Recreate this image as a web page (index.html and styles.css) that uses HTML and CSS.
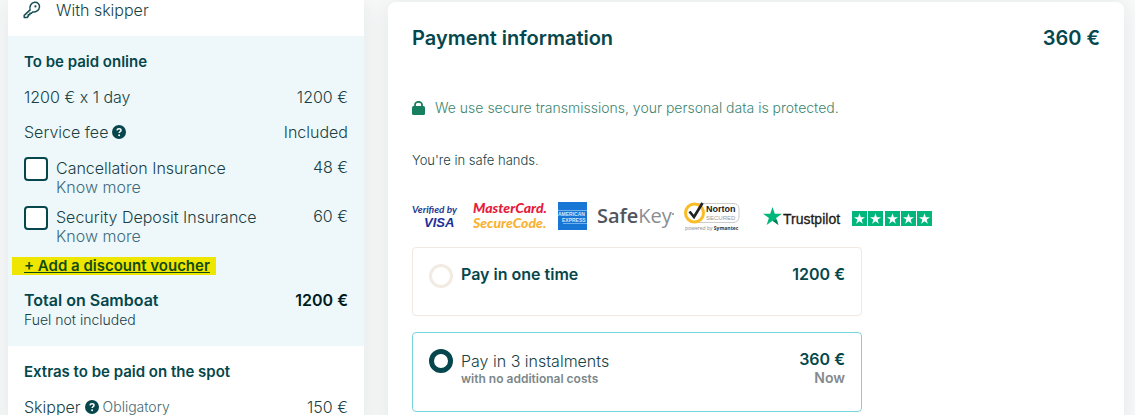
FILE: index.html
```html
<!DOCTYPE html>
<html lang="en">
<head>
<meta charset="utf-8">
<title>Payment information</title>
<link rel="stylesheet" href="styles.css">
</head>
<body>
<svg class="defs" width="0" height="0" aria-hidden="true">
  <symbol id="help" viewBox="0 0 14 14">
    <circle cx="7" cy="7" r="7" fill="#05474c"/>
    <path d="M5 5.4C5.1 4.3 5.9 3.8 7 3.8C8.2 3.8 9 4.4 9 5.4C9 6.7 7.2 6.6 7.1 8" fill="none" stroke="#fff" stroke-width="1.5"/>
    <circle cx="7.1" cy="10.2" r="1" fill="#fff"/>
  </symbol>
  <symbol id="star" viewBox="0 0 20 19">
    <path d="M10 0L12.4 7.2H20L13.8 11.7L16.2 19L10 14.5L3.8 19L6.2 11.7L0 7.2H7.6Z"/>
  </symbol>
</svg>
<div class="layout">
  <aside class="card summary">
    <div class="crew">
      <svg class="key" viewBox="0 0 18 18" width="18" height="18" aria-hidden="true">
        <path d="M7.1 8.9C6.2 5.8 7.8 1.6 11.6 1.3C14.6 1.1 16.7 3 16.5 6C16.2 9.4 12.8 11.5 9.6 10.9L8.4 12.2H6.9V13.8H5.2V15.4L3.8 16.6H1.2V14.4Z" fill="none" stroke="#174e54" stroke-width="1.5" stroke-linejoin="round"/>
        <circle cx="12.4" cy="5.4" r="1.1" fill="#174e54"/>
      </svg>
      <span>With skipper</span>
    </div>
    <section class="online">
      <h2 class="subhead">To be paid online</h2>
      <div class="row"><span>1200 € x 1 day</span><span>1200 €</span></div>
      <div class="row"><span class="term">Service fee <svg class="help" aria-hidden="true"><use href="#help"/></svg></span><span>Included</span></div>
      <div class="option">
        <input class="check" type="checkbox" id="cancel">
        <div class="option-text"><label for="cancel">Cancellation Insurance</label><a class="more" href="#cancel">Know more</a></div>
        <span>48 €</span>
      </div>
      <div class="option">
        <input class="check" type="checkbox" id="deposit">
        <div class="option-text"><label for="deposit">Security Deposit Insurance</label><a class="more" href="#deposit">Know more</a></div>
        <span>60 €</span>
      </div>
      <a class="voucher" href="#voucher">+ Add a discount voucher</a>
      <div class="total"><span>Total on Samboat</span><span class="sum">1200 €</span></div>
      <p class="note">Fuel not included</p>
    </section>
    <section class="extras">
      <h2 class="subhead">Extras to be paid on the spot</h2>
      <div class="row"><span class="term">Skipper <svg class="help" aria-hidden="true"><use href="#help"/></svg> <small class="small">Obligatory</small></span><span>150 €</span></div>
    </section>
  </aside>
  <main class="card payment">
    <header class="title"><h1 class="heading">Payment information</h1><span>360 €</span></header>
    <p class="secure">
      <svg viewBox="0 0 13 14" width="13" height="14" aria-hidden="true"><rect y="5" width="13" height="9" rx="1.5" fill="#157f5f"/><path d="M3 6V4A3.5 3.2 0 0 1 10 4V6" fill="none" stroke="#157f5f" stroke-width="1.8"/></svg>
      We use secure transmissions, your personal data is protected.
    </p>
    <p class="safe">You're in safe hands.</p>
    <div class="logos">
      <svg width="51" height="32" role="img" aria-label="Verified by VISA">
        <text x="0" y="13" class="verified">Verified by</text>
        <text x="12" y="27" class="visa">VISA</text>
      </svg>
      <svg width="75" height="32" role="img" aria-label="MasterCard SecureCode">
        <text x="0" y="13" class="mc" fill="#e71b3b">MasterCard.</text>
        <text x="0" y="28" class="mc" fill="#f9b233">SecureCode.</text>
      </svg>
      <svg width="29" height="32" role="img" aria-label="American Express">
        <rect y="2" width="29" height="28" fill="#1877d4"/>
        <rect x="0" y="10" width="29" height="1" fill="#71b1ec"/>
        <text x="0" y="16" class="amex">AMERICAN</text>
        <text x="4" y="22" class="amex">EXPRESS</text>
        <rect x="5" y="23" width="24" height="1" fill="#71b1ec"/>
      </svg>
      <svg width="77" height="32" role="img" aria-label="SafeKey">
        <text x="0" y="23" class="safekey"><tspan class="safe-bold">Safe</tspan><tspan>Key</tspan></text>
        <circle cx="76" cy="14" r="1" fill="#8a8d92"/>
      </svg>
      <svg width="56" height="32" role="img" aria-label="Norton Secured, powered by Symantec">
        <path d="M14 3.5H49Q55 3.5 55 9V16Q55 22.5 49 22.5H14" fill="#fff" stroke="#ccc" stroke-width="1"/>
        <circle cx="10.5" cy="13" r="9" fill="#fff" stroke="#fbbc25" stroke-width="3"/>
        <path d="M5.5 11.5L10 17L18.5 3" fill="none" stroke="#222" stroke-width="2.7"/>
        <text x="22" y="12" class="norton">Norton</text>
        <text x="22" y="20" class="secured">SECURED</text>
        <text x="1" y="30" class="powered">powered by <tspan class="symantec">Symantec</tspan></text>
      </svg>
      <svg class="trust" width="79" height="32" role="img" aria-label="Trustpilot">
        <use href="#star" x="0" y="7" width="19" height="18" fill="#00b67a"/>
        <path d="M9.5 20.8L14 19.6L15.4 25Z" fill="#005128" opacity=".55"/>
        <text x="20" y="24" class="trustpilot">Trustpilot</text>
      </svg>
      <svg width="81" height="32" role="img" aria-label="Five stars">
        <g fill="#00b67a"><rect y="11" width="15" height="15"/><rect x="16" y="11" width="15" height="15"/><rect x="33" y="11" width="15" height="15"/><rect x="49" y="11" width="15" height="15"/><rect x="65" y="11" width="15" height="15"/></g>
        <g fill="#fff"><use href="#star" x="2" y="13" width="11" height="11"/><use href="#star" x="18" y="13" width="11" height="11"/><use href="#star" x="35" y="13" width="11" height="11"/><use href="#star" x="51" y="13" width="11" height="11"/><use href="#star" x="67" y="13" width="11" height="11"/></g>
      </svg>
    </div>
    <form class="plans">
      <label class="plan">
        <input class="radio" type="radio" name="plan">
        <span class="plan-name strong">Pay in one time</span>
        <span class="price">1200 €</span>
      </label>
      <label class="plan chosen">
        <input class="radio" type="radio" name="plan" checked>
        <span class="plan-name detailed">Pay in 3 instalments<small class="costs">with no additional costs</small></span>
        <span class="price">360 €<small class="now">Now</small></span>
      </label>
    </form>
  </main>
</div>
</body>
</html>
```
FILE: styles.css
```css
* { box-sizing: border-box; }
body { margin: 0; background: #f9fafa; color: #173f45; font: 300 16px/20px Inter, "Noto Sans", sans-serif; }
h1, h2, p { margin: 0; }
a { color: inherit; text-decoration: none; }
.defs { position: absolute; }
.layout { display: grid; grid-template-columns: 356px 1fr; gap: 24px; padding: 0 11px 0 8px; min-height: 100vh; max-height: 100vh; overflow: hidden; }
.card { background: #fff; box-shadow: 0 0 24px rgba(0, 50, 55, .1); }
.crew { display: flex; align-items: center; gap: 15px; height: 36px; padding: 0 15px 16px; }
.key { flex: none; }
.online { display: flow-root; background: #eef8fa; padding: 16px; }
.subhead { font-size: 15px; line-height: 20px; font-weight: 600; color: #05474c; margin-bottom: 15px; }
.row { display: flex; justify-content: space-between; margin-bottom: 15px; }
.term { display: flex; align-items: center; gap: 4px; }
.help { width: 14px; height: 14px; flex: none; }
.small { font-size: 14px; color: #456a6f; }
.option { display: flex; gap: 8px; margin-bottom: 9px; }
.check { appearance: none; flex: none; width: 24px; height: 24px; margin: 0; border: 2px solid #05474c; border-radius: 4px; background: #fff; }
.option-text { display: flex; flex-direction: column; flex: 1; padding-top: 2px; line-height: 19px; }
.more { color: #416b7c; }
.voucher { display: block; width: fit-content; background: #efe600; color: #124b10; font-weight: 600; font-size: 15px; line-height: 18px; margin: 11px 0 0 -12px; padding: 0 6px 0 12px; text-decoration: underline; }
.total { display: flex; justify-content: space-between; margin-top: 15px; font-weight: 600; color: #05474c; }
.sum { color: #001a20; }
.note { font-size: 14px; }
.extras { padding: 16px 16px 0; }
.payment { margin-top: 2px; border-radius: 8px 8px 0 0; padding: 24px 24px 0; }
.title { display: flex; justify-content: space-between; font-size: 20px; line-height: 24px; font-weight: 600; color: #05474c; }
.heading { font: inherit; }
.secure { display: flex; align-items: center; gap: 10px; margin-top: 48px; font-size: 14px; color: #3c8570; }
.safe { margin-top: 32px; font-size: 13px; }
.logos { display: flex; align-items: center; gap: 10px; margin-top: 30px; }
.logos svg { flex: none; display: block; }
.trust { margin-left: 13px; }
.logos .verified { font: italic 700 10px Lato, sans-serif; fill: #243c91; }
.logos .visa { font: italic 700 13px "Liberation Sans", sans-serif; fill: #1c2f98; }
.logos .mc { font: italic 900 14px Lato, sans-serif; }
.logos .amex { font: 700 5px "Liberation Sans", sans-serif; fill: #d3e8ff; }
.logos .safekey { font: 400 20px "Open Sans", sans-serif; fill: #8a8d92; }
.safe-bold { font-weight: 600; fill: #4f545d; }
.logos .norton { font: 700 9px "Liberation Sans", sans-serif; fill: #222; }
.logos .secured { font: 400 6px "Liberation Sans", sans-serif; fill: #999; }
.logos .powered { font: 400 5px "Open Sans", sans-serif; fill: #888; }
.symantec { font-weight: 700; fill: #333; }
.logos .trustpilot { font: 500 14px "Liberation Sans", sans-serif; fill: #191919; stroke: #191919; stroke-width: .3; }
.plans { display: grid; gap: 16px; max-width: 450px; margin-top: 15px; }
.plan { display: flex; gap: 8px; min-height: 69px; padding: 16px 16px 24px; border: 1px solid #f0e9e0; border-radius: 4px; }
.chosen { border-color: #76d6dc; }
.radio { appearance: none; flex: none; width: 24px; height: 24px; margin: 0; border: 3px solid #f2ebe2; border-radius: 50%; }
.radio:checked { border: 5px solid #05474c; }
.plan-name { display: flex; flex-direction: column; flex: 1; }
.detailed { padding-top: 2px; }
.price { display: flex; flex-direction: column; align-items: flex-end; font-weight: 600; color: #05474c; }
.strong { font-weight: 600; color: #05474c; }
.costs { font-size: 12px; line-height: 16px; font-weight: 600; color: #7b8789; }
.now { font-size: 14px; line-height: 18px; color: #85898a; }
```
